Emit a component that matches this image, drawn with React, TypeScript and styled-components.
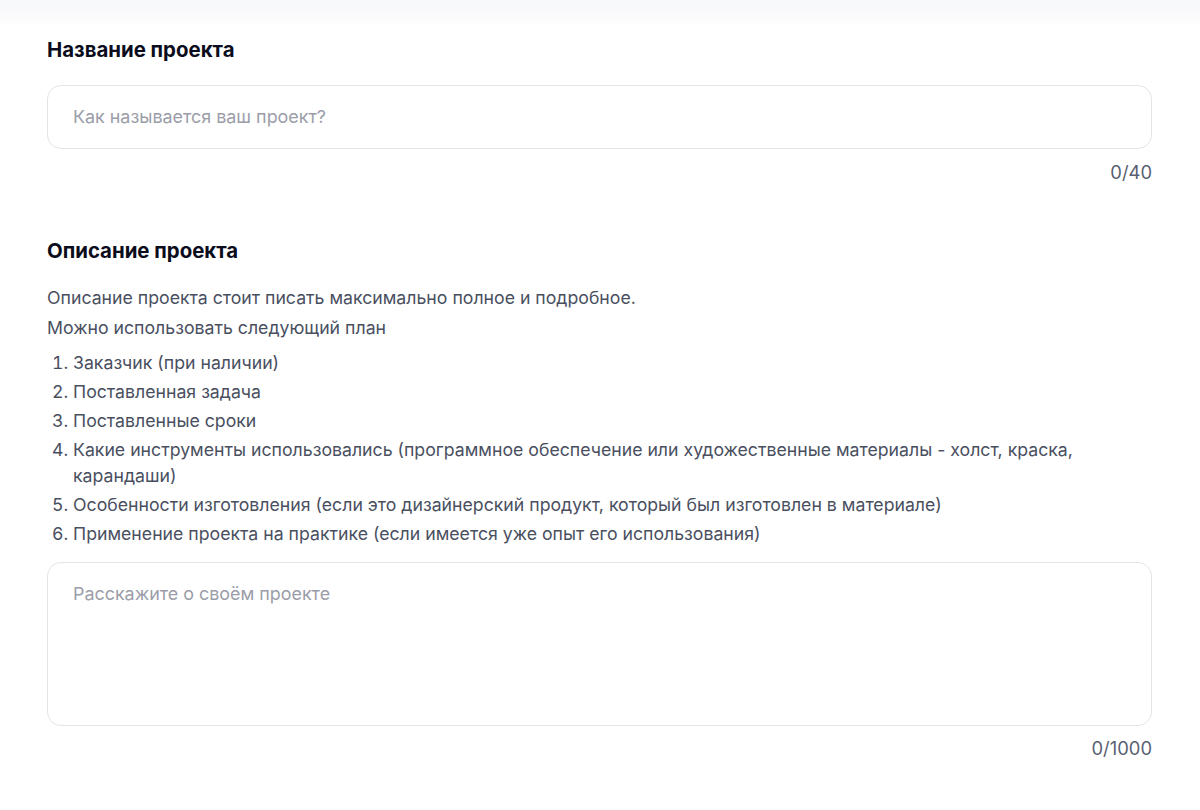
import React from "react";
import styled, { createGlobalStyle } from "styled-components";

const Global = createGlobalStyle`
  html, body { margin: 0; padding: 0; background: #ffffff; }
  body { font-family: Inter, "Noto Sans", sans-serif; -webkit-font-smoothing: antialiased; }
  * { box-sizing: border-box; }
`;

const TopShade = styled.div`
  height: 26px;
  background: linear-gradient(#f8f9fa 0%, #f9f9fb 45%, #ffffff 100%);
`;

const Form = styled.div`
  padding: 12px 48px 40px 47px;
  display: flex;
  flex-direction: column;
`;

const Section = styled.section<{ $gapTop?: number }>`
  display: flex;
  flex-direction: column;
  margin-top: ${(p) => p.$gapTop ?? 0}px;
`;

const Title = styled.h2`
  margin: 0;
  font-size: 20.4px;
  line-height: 24px;
  font-weight: 700;
  color: #0c0d1c;
`;

const Field = styled.div<{ $h: number; $top: number }>`
  margin-top: ${(p) => p.$top}px;
  height: ${(p) => p.$h}px;
  border: 1px solid #e4e4e8;
  border-radius: 14px;
  background: #fff;
  padding: ${(p) => (p.$h > 100 ? "20px 25px" : "0 25px")};
  display: flex;
  align-items: ${(p) => (p.$h > 100 ? "flex-start" : "center")};
`;

const Placeholder = styled.span`
  font-size: 17.9px;
  line-height: 22px;
  color: #9b9da9;
`;

const Counter = styled.div<{ $top?: number }>`
  margin-top: ${(p) => p.$top ?? 12}px;
  align-self: flex-end;
  font-size: 18.4px;
  line-height: 22px;
  color: #5a5f72;
`;

const Para = styled.p`
  margin: 20px 0 0;
  font-size: 17.7px;
  line-height: 30px;
  color: #4a4f5f;
`;

const Plan = styled.ol`
  margin: 7px 0 0;
  padding-left: 26px;
  display: flex;
  flex-direction: column;
  gap: 3px;
  font-size: 17.7px;
  line-height: 26px;
  color: #4a4f5f;
`;

const Item = styled.li`
  padding-left: 0;
`;

const plan = [
  "Заказчик (при наличии)",
  "Поставленная задача",
  "Поставленные сроки",
  "Какие инструменты использовались (программное обеспечение или художественные материалы - холст, краска, карандаши)",
  "Особенности изготовления (если это дизайнерский продукт, который был изготовлен в материале)",
  "Применение проекта на практике (если имеется уже опыт его использования)",
];

export default function App() {
  return (
    <>
      <Global />
      <TopShade />
      <Form>
        <Section>
          <Title>Название проекта</Title>
          <Field $h={64} $top={23}>
            <Placeholder>Как называется ваш проект?</Placeholder>
          </Field>
          <Counter>0/40</Counter>
        </Section>
        <Section $gapTop={56}>
          <Title>Описание проекта</Title>
          <Para>
            Описание проекта стоит писать максимально полное и подробное.
            <br />
            Можно использовать следующий план
          </Para>
          <Plan>
            {plan.map((t) => (
              <Item key={t}>{t}</Item>
            ))}
          </Plan>
          <Field $h={164} $top={15}>
            <Placeholder>Расскажите о своём проекте</Placeholder>
          </Field>
          <Counter $top={11}>0/1000</Counter>
        </Section>
      </Form>
    </>
  );
}
